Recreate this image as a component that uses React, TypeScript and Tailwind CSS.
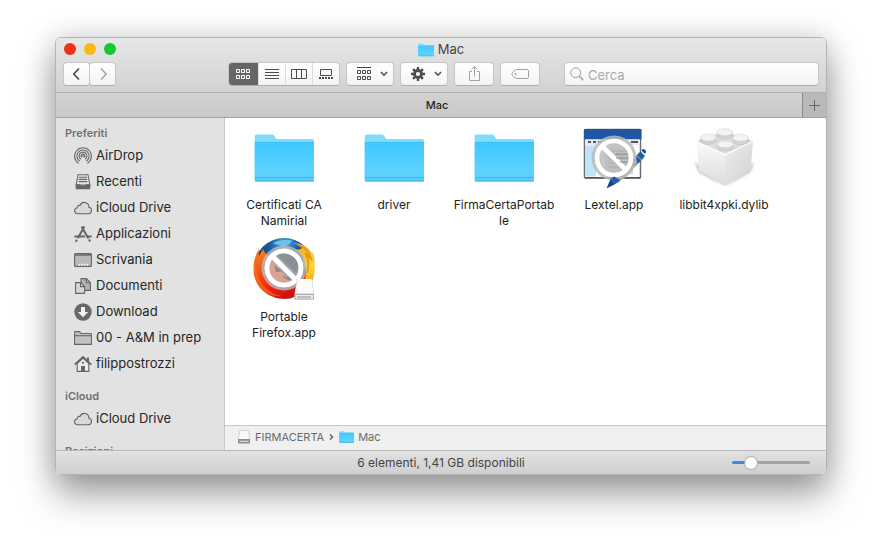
import { useState } from "react";
import type { ReactNode } from "react";

const FolderIcon = ({ className }: { className?: string }) => (
  <svg viewBox="2 8 60 48" className={className} aria-hidden="true">
    <defs>
      <linearGradient id="folderFront" x1="0" y1="0" x2="0" y2="1">
        <stop offset="0" stopColor="#3ec8ff" />
        <stop offset="0.75" stopColor="#5ed3ff" />
        <stop offset="1" stopColor="#54cbfa" />
      </linearGradient>
    </defs>
    <path
      d="M2.7 54V10.5c0-1.2.8-2 2-2h14.5c1.8 0 2.6.6 3.5 2l1.1 1.7c.5.7 1 .9 2 .9H60c1.2 0 2 .8 2 2V54z"
      fill="#7fdcfa"
    />
    <path
      d="M2.7 17.6c0-1 .7-1.7 1.700-1.700h56c1 0 1.600.7 1.600 1.700V54c0 .9-.6 1.500-1.500 1.500H4.200c-.9 0-1.500-.6-1.500-1.500z"
      fill="url(#folderFront)"
    />
    <path d="M2.7 16.4h59.300" stroke="#38bdf0" strokeWidth="0.7" />
    <path d="M3 51.5h59M3 55h59" stroke="#3fb3e2" strokeWidth="0.9" />
  </svg>
);

const Prohibited = ({ cy = 32 }: { cy?: number }) => (
  <g>
    <circle cx="32" cy={cy} r="22.5" fill="#b9b9b9" fillOpacity="0.82" />
    <circle cx="32" cy={cy} r="17" fill="none" stroke="#fff" strokeWidth="4.6" />
    <path d={`M20.5 ${cy - 11.5}L43.5 ${cy + 11.5}`} stroke="#fff" strokeWidth="4.6" />
  </g>
);

const LextelIcon = () => (
  <svg viewBox="0 0 64 64" className="size-16" aria-hidden="true">
    <rect x="2.5" y="3.5" width="56" height="48.5" rx="1" fill="#fff" stroke="#6b6e73" strokeWidth="1.5" />
    <path d="M3 51.8h55.5" stroke="#55585c" strokeWidth="1.5" />
    <rect x="2" y="3" width="57.5" height="10.5" fill="#1f57a6" />
    <rect x="3" y="13.5" width="55" height="5.5" fill="#e6e8ea" />
    <path d="M6 16h3m2 0h3m2 0h3m30 0h7" stroke="#54585e" strokeWidth="2" />
    <rect x="4" y="19.5" width="10" height="31" fill="#bfe4f7" />
    <rect x="23" y="21" width="28" height="27" fill="#d4d6d8" />
    <path d="M27 25h20M27 29h20M27 33h20M27 37h16M27 41h12" stroke="#74787d" strokeWidth="1.2" />
    <path d="M30 52L57 27l5 5-26 25z" fill="#8f9297" />
    <Prohibited />
    <path d="M34 28h12M34 32h12M38 36h8" stroke="#8d9094" strokeWidth="1" />
    <path d="M24.5 62.5l4-9.5 5 5z" fill="#174987" />
    <path d="M28.5 53l3.5-2.5 6 3.5-4.5 4z" fill="#1f5dab" />
    <path d="M55 29l3.500-3.500 4.500 4.500-3.500 3.500z" fill="#1f5dab" />
    <path d="M59.5 24.5l1-1c.6-.6 1.400-.6 2 0l1.200 1.300c.6.6.6 1.300 0 1.900l-1 1z" fill="#174987" />
    <path d="M54.5 30l4.500 4.500-3 3-1.500-4z" fill="#1f5dab" />
  </svg>
);

const studs = [
  [32.7, 7.3],
  [16.3, 12.5],
  [48.7, 12.8],
  [33.3, 19.3],
];

const BrickIcon = () => (
  <svg viewBox="0 0 64 64" className="size-16" aria-hidden="true">
    <defs>
      <linearGradient id="brickLeft" x1="0" y1="0" x2="0" y2="1">
        <stop offset="0" stopColor="#fafafa" />
        <stop offset="1" stopColor="#dcdcdc" />
      </linearGradient>
      <linearGradient id="brickRight" x1="0" y1="0" x2="1" y2="1">
        <stop offset="0" stopColor="#ececec" />
        <stop offset="1" stopColor="#d2d2d2" />
      </linearGradient>
      <filter id="brickBlur">
        <feGaussianBlur stdDeviation="1.5" />
      </filter>
    </defs>
    <path d="M3 36l30 24 29-24-4 10-25 14L7 46z" fill="#b5b5b5" filter="url(#brickBlur)" />
    <path d="M4.500 15L32.500 5 61 15 33 28z" fill="#dedede" />
    <path d="M4.500 15.500L33 29v31L7 44.500z" fill="url(#brickLeft)" />
    <path d="M61 15.500L33 29v31l25.500-15.500z" fill="url(#brickRight)" />
    <path d="M4.500 15.500L33 29l28-13.500" fill="none" stroke="#fff" strokeWidth="1" />
    {studs.map(([x, y]) => (
      <g key={x}>
        <ellipse cx={x} cy={y + 1.7} rx="8.2" ry="4.3" fill="#b4b4b4" />
        <path d={`M${x - 7.8} ${y - 1}v3c0 5 15.600 5 15.600 0v-3z`} fill="#d2d2d2" />
        <ellipse cx={x} cy={y - 1} rx="7.8" ry="3.5" fill="#f3f3f3" stroke="#cccccc" strokeWidth="0.5" />
      </g>
    ))}
  </svg>
);

const FirefoxIcon = () => (
  <svg viewBox="0 0 64 64" className="size-16" aria-hidden="true">
    <defs>
      <radialGradient id="globe" cx="0.5" cy="0.1" r="0.6">
        <stop offset="0" stopColor="#4fa8de" />
        <stop offset="0.4" stopColor="#1d5ba3" />
        <stop offset="1" stopColor="#12305f" />
      </radialGradient>
      <linearGradient id="fox" x1="0" y1="0" x2="0.4" y2="1">
        <stop offset="0" stopColor="#f58a1f" />
        <stop offset="0.4" stopColor="#f4581a" />
        <stop offset="0.8" stopColor="#f01e12" />
        <stop offset="1" stopColor="#c8160f" />
      </linearGradient>
      <linearGradient id="tail" x1="0" y1="0" x2="0" y2="1">
        <stop offset="0" stopColor="#f0a81f" />
        <stop offset="0.5" stopColor="#fbd936" />
        <stop offset="1" stopColor="#f0901c" />
      </linearGradient>
    </defs>
    <circle cx="32" cy="30" r="30" fill="url(#globe)" />
    <path d="M21 6c4-4 14-5 20-3-3 1-3 4-8 5-4 1-6-2-12-2z" fill="#6cc2ec" />
    <path
      d="M7 10c-1 3 0 6 0 8l4-7c1 3 3 5 5 6h8c-1 4-2 6-6 8-2 11 4 19 14 20 9 1 15-3 19-8l8-5C57 49 47 61 33 61 15 61 1.500 48 1.500 31 1.500 22 4 16 7 10z"
      fill="url(#fox)"
    />
    <path d="M4 22C2 38 12 55 30 58 14 60 2 48 2 32c0-4 1-7 2-10z" fill="#f77a1c" opacity="0.6" />
    <path
      d="M40 5c10 0 17 4 21 12l-1-5c4 9 4 25-1 34l-11 5c6-8 8-17 3-25 1-8-3-12-9-14 4 0 7-1 8-2-3-3-6-4-10-5z"
      fill="url(#tail)"
    />
    <path d="M46 7c7 2 11 7 13 14l-6-6c4 6 4 13 2 20" fill="none" stroke="#e8961b" strokeWidth="1.8" />
    <path d="M18 25c6-3 12-2 15 1-4 4-7 5-12 6 5 8 15 10 21 6-3 10-17 13-24 4-4-5-4-12 0-17z" fill="#ee6f34" />
    <Prohibited cy={30} />
    <path d="M26 15c6-1 16 2 19 9 1 5 1 8-1 11L25 17z" fill="#8c8f93" />
    <path d="M18 23l22 20c-9 5-22-1-23-12z" fill="#d9a493" />
    <path d="M22 27l8 6c-2 1-4 1-6 1zM30 37c3 2 5 2 7 2l3 3c-4 1-8-1-10-5z" fill="#8f8a8b" />
    <circle cx="32" cy="30" r="17" fill="none" stroke="#fff" strokeWidth="4.6" />
    <path d="M20.500 18.500l23 23" stroke="#fff" strokeWidth="4.6" />
    <path d="M45 41h15l2 15v5.500H42.500V56z" fill="#c9c9c9" />
    <path d="M45.500 41h14l2 14.500H43z" fill="#fbfbfb" />
    <path d="M43 56.500h18.500V61H43z" fill="#eeeeee" stroke="#9a9a9a" strokeWidth="0.7" />
    <path d="M45 59h14" stroke="#777" strokeWidth="0.8" />
  </svg>
);

const DriveIcon = () => (
  <svg viewBox="0 0 14 16" className="h-4 w-3.5" aria-hidden="true">
    <path d="M2.700 1.500h8.600l1.500 9.500H1.200z" fill="#fafafa" stroke="#c4c4c4" strokeWidth="0.7" />
    <rect x="1" y="10" width="12" height="4.5" rx="0.8" fill="#8e8e8e" />
    <path d="M2.500 12.300h9" stroke="#d6d6d6" strokeWidth="1.2" />
  </svg>
);

const SideIcon = ({ children }: { children: ReactNode }) => (
  <svg
    viewBox="0 0 18 18"
    className="size-[18px] shrink-0"
    fill="none"
    stroke="#666666"
    strokeWidth="1.1"
    aria-hidden="true"
  >
    {children}
  </svg>
);

const CloudIcon = () => (
  <SideIcon>
    <path
      d="M4 14.700C2 14.700.6 13.400.6 11.700c0-1.500 1-2.600 2.500-2.900-.1-1.700 1.300-2.800 2.900-2.300.7-1.900 2.300-3.100 4.300-3.100 2.700 0 4.700 2 4.600 4.700 1.600.3 2.600 1.600 2.600 3.200 0 2-1.500 3.400-3.500 3.400z"
      fill="#d9d9d9"
    />
  </SideIcon>
);

const AirDropIcon = () => (
  <SideIcon>
    <path d="M4.700 16.400a8.400 8.400 0 1 1 8.600 0" />
    <path d="M5.700 14.200a6.100 6.100 0 1 1 6.600 0" />
    <path d="M6.800 12.200a3.900 3.900 0 1 1 4.400 0" />
    <path d="M7.800 10.500a1.900 1.900 0 1 1 2.400 0" />
    <circle cx="9" cy="9" r="0.9" fill="#666" stroke="none" />
  </SideIcon>
);

const RecentsIcon = () => (
  <SideIcon>
    <path d="M4 1.700h10l1.800 10.300H2.200z" fill="#e4e4e4" />
    <path d="M5 4.200h8M4.800 6.400h8.400M4.600 8.600h8.800" />
    <path
      d="M1.700 11.300h4.200c.4 1.500 5.800 1.500 6.200 0h4.200v3.900c0 .7-.4 1.100-1.100 1.100H2.800c-.7 0-1.100-.4-1.100-1.100z"
      fill="#666"
      stroke="none"
    />
  </SideIcon>
);

const AppsIcon = () => (
  <SideIcon>
    <path d="M10.400 1.500L3.800 13.300M7.600 1.500l6.800 12" strokeWidth="2" />
    <path d="M.4 11.500h10.800M13.400 11.500h4.200" strokeWidth="1.8" />
    <path d="M2.900 14.700l-1.100 2M15 14.500l1.200 2" strokeWidth="2" />
  </SideIcon>
);

const DesktopIcon = () => (
  <SideIcon>
    <rect x="0.6" y="2.6" width="16.8" height="12.8" rx="1" fill="#b9b9b9" />
    <path d="M1 4h16" strokeWidth="1.4" />
    <path d="M4.500 13.800h9.500" stroke="#f3f3f3" strokeWidth="2" strokeDasharray="1.600 1" />
    <path d="M1 15.500h16" />
  </SideIcon>
);

const DocumentsIcon = () => (
  <SideIcon>
    <path d="M7 1.600h5.600l3.800 4v7.800H7z" fill="#b2b2b2" />
    <path d="M12.300 1.600v4.200h4" />
    <path d="M1.600 5.600h5.200l3.800 3.800v7H1.600z" fill="#d7d7d7" />
    <path d="M6.600 5.600v4h4" />
  </SideIcon>
);

const DownloadIcon = () => (
  <SideIcon>
    <circle cx="9" cy="9" r="8.7" fill="#686868" stroke="none" />
    <path d="M7 4h4v5h3.200L9 14.200 3.800 9H7z" fill="#f2f2f2" stroke="none" />
  </SideIcon>
);

const SideFolderIcon = () => (
  <SideIcon>
    <path d="M.6 15.400V3.200c0-.4.2-.6.6-.6h4.300l1.500 1.900h9.800c.4 0 .6.200.6.6v10.300z" fill="#c2c2c2" />
    <path d="M.6 6.700h16.800" />
  </SideIcon>
);

const HomeIcon = () => (
  <SideIcon>
    <path d="M3.200 8.500L9 3.200l5.800 5.300v7.900H3.200z" fill="#ececec" />
    <path d="M.7 9.700L9 2l8.300 7.700" strokeWidth="1.8" />
    <path d="M14 2.500v4" strokeWidth="2" />
    <circle cx="9" cy="7.8" r="1.1" fill="#666" stroke="none" />
    <path d="M7 11h4v5.400H7z" fill="#666" stroke="none" />
  </SideIcon>
);

const Chevron = () => (
  <svg viewBox="0 0 8 6" className="h-1.5 w-2" fill="none" stroke="#4d4d4d" strokeWidth="1.5" aria-hidden="true">
    <path d="M1 1l3 3.200L7 1" />
  </svg>
);

// Shared look for the small line drawings inside the toolbar buttons
const ToolIcon = ({ stroke = "#4d4d4d", children }: { stroke?: string; children: ReactNode }) => (
  <svg viewBox="0 0 16 16" className="size-4 shrink-0" fill="none" stroke={stroke} aria-hidden="true">
    {children}
  </svg>
);

const views = [
  {
    label: "Icone",
    icon: (
      <path d="M1.500 3.500h3v3h-3zM6.500 3.500h3v3h-3zM11.500 3.500h3v3h-3zM1.500 9.500h3v3h-3zM6.500 9.500h3v3h-3zM11.500 9.500h3v3h-3z" />
    ),
  },
  { label: "Elenco", icon: <path d="M1 3.500h14M1 6.500h14M1 9.500h14M1 12.500h14" /> },
  { label: "Colonne", icon: <path d="M.5 3.500h15v9H.5zM5.500 3.500v9M10.500 3.500v9" /> },
  {
    label: "Galleria",
    icon: (
      <>
        <path d="M2.500 3.500h11v6h-11z" />
        <path d="M1 12h14" strokeWidth="2" strokeDasharray="2 1" />
      </>
    ),
  },
];

const favorites = [
  { label: "AirDrop", icon: <AirDropIcon /> },
  { label: "Recenti", icon: <RecentsIcon /> },
  { label: "iCloud Drive", icon: <CloudIcon /> },
  { label: "Applicazioni", icon: <AppsIcon /> },
  { label: "Scrivania", icon: <DesktopIcon /> },
  { label: "Documenti", icon: <DocumentsIcon /> },
  { label: "Download", icon: <DownloadIcon /> },
  { label: "00 - A&M in prep", icon: <SideFolderIcon /> },
  { label: "filippostrozzi", icon: <HomeIcon /> },
];

const sections = [
  { title: "Preferiti", items: favorites },
  { title: "iCloud", items: [{ label: "iCloud Drive", icon: <CloudIcon /> }] },
  { title: "Posizioni", items: [] },
];

const folder = <FolderIcon className="h-12 w-[60px]" />;

const files = [
  { name: "Certificati CA Namirial", icon: folder },
  { name: "driver", icon: folder },
  { name: "FirmaCertaPortable", icon: folder },
  { name: "Lextel.app", icon: <LextelIcon /> },
  { name: "libbit4xpki.dylib", icon: <BrickIcon /> },
  { name: "Portable Firefox.app", icon: <FirefoxIcon /> },
];

const buttonStyle =
  "flex h-6 items-center justify-center rounded border border-[#c6c6c6] border-b-[#b0b0b0] bg-linear-to-b from-white to-[#f4f4f4]";

const Toolbar = () => {
  const [view, setView] = useState("Icone");
  const [query, setQuery] = useState("");

  return (
    <div className="flex items-center px-[7px] pt-0.5 pb-1.5">
      <div className="mr-28 flex">
        <button type="button" aria-label="Indietro" className={`${buttonStyle} w-[27px]`}>
          <ToolIcon>
            <path d="M10 2.500L4.800 8l5.200 5.500" strokeWidth="1.7" />
          </ToolIcon>
        </button>
        <button type="button" aria-label="Avanti" className={`${buttonStyle} -ml-px w-[27px]`}>
          <ToolIcon stroke="#a6a6a6">
            <path d="M6 2.500L11.200 8 6 13.500" strokeWidth="1.6" />
          </ToolIcon>
        </button>
      </div>

      <div className="flex flex-1 gap-1.5">
        <div className={`${buttonStyle} shrink-0 overflow-hidden`}>
          {views.map((v) => (
            <button
              key={v.label}
              type="button"
              aria-label={v.label}
              aria-pressed={view === v.label}
              onClick={() => setView(v.label)}
              className={
                view === v.label
                  ? "-my-px -ml-px flex h-6 w-[30px] items-center justify-center bg-[#666666]"
                  : "flex h-6 w-[27px] items-center justify-center border-l border-[#dcdcdc]"
              }
            >
              <ToolIcon stroke={view === v.label ? "#ffffff" : "#4d4d4d"}>{v.icon}</ToolIcon>
            </button>
          ))}
        </div>
        <button type="button" aria-label="Raggruppa" className={`${buttonStyle} w-12 gap-2 pl-1`}>
          <ToolIcon>
            <path d="M1 1.500h14M1.500 4.500h3v3h-3zM6.500 4.500h3v3h-3zM11.500 4.500h3v3h-3zM1.500 10.500h3v3h-3zM6.500 10.500h3v3h-3zM11.500 10.500h3v3h-3z" />
          </ToolIcon>
          <Chevron />
        </button>
        <button type="button" aria-label="Azioni" className={`${buttonStyle} w-12 gap-2 pl-1`}>
          <ToolIcon>
            <circle cx="8" cy="8" r="3.5" strokeWidth="2.8" />
            <path
              d="M8 1v3M8 12v3M1 8h3M12 8h3M3.050 3.050l2 2M10.950 10.950l2 2M3.050 12.950l2-2M10.950 5.050l2-2"
              strokeWidth="2.4"
            />
          </ToolIcon>
          <Chevron />
        </button>
        <button type="button" aria-label="Condividi" className={`${buttonStyle} w-10`}>
          <ToolIcon stroke="#a3a3a3">
            <path d="M6 5.500H3.500v9h10v-9H11M8.500 10.500v-10M5.500 3.500l3-3 3 3" />
          </ToolIcon>
        </button>
        <button type="button" aria-label="Tag" className={`${buttonStyle} w-10`}>
          <svg viewBox="0 0 18 12" className="h-3 w-[18px]" fill="none" stroke="#a0a0a0" aria-hidden="true">
            <path d="M5.500 1.500H16c.8 0 1.500.7 1.500 1.500v6c0 .8-.7 1.500-1.500 1.500H5.500C4 10.500.8 7.200.8 6S4 1.500 5.500 1.500z" />
            <circle cx="4.500" cy="6" r="0.7" />
          </svg>
        </button>

        <div className="ml-[18px] flex h-6 min-w-0 flex-1 items-center gap-1 rounded border border-[#c6c6c6] border-b-[#b0b0b0] bg-linear-to-b from-white to-[#f4f4f4] px-[5px]">
          <svg viewBox="0 0 14 14" className="size-3.5 shrink-0" fill="none" stroke="#9b9b9b" aria-hidden="true">
            <circle cx="5.7" cy="5.7" r="4.9" />
            <path d="M9.300 9.300l4 4" strokeWidth="1.3" />
          </svg>
          <input
            type="search"
            aria-label="Cerca"
            value={query}
            onChange={(e) => setQuery(e.target.value)}
            placeholder="Cerca"
            className="h-full min-w-0 flex-1 bg-transparent pt-0.5 text-[13px] text-[#333333] outline-none placeholder:text-[#a9a9a9]"
          />
        </div>
      </div>
    </div>
  );
};

const Sidebar = () => (
  <nav className="flex w-[169px] shrink-0 flex-col gap-[11px] overflow-hidden border-r border-[#c8c8c8] bg-[#e2e2e2] pt-[7px]">
    {sections.map((section) => (
      <div key={section.title}>
        <h2 className="mb-0.5 pl-[9px] text-[11px] leading-4 font-semibold text-[#707070]">{section.title}</h2>
        <ul>
          {section.items.map((item) => (
            <li key={item.label}>
              <a href="#" className="flex h-[26px] items-center gap-1 pl-[18px] text-[13px] text-[#262626]">
                {item.icon}
                <span className="whitespace-nowrap">{item.label}</span>
              </a>
            </li>
          ))}
        </ul>
      </div>
    ))}
  </nav>
);

const StatusBar = () => {
  const [zoom, setZoom] = useState(20);

  return (
    <footer className="grid h-6 shrink-0 grid-cols-[1fr_auto_1fr] items-center border-t border-[#b9b9b9] bg-linear-to-b from-[#e2e2e2] to-[#cfcfcf] px-4">
      <p className="col-start-2 text-xs text-[#454545]">6 elementi, 1,41 GB disponibili</p>
      <input
        type="range"
        aria-label="Dimensione icone"
        min="0"
        max="100"
        value={zoom}
        onChange={(e) => setZoom(Number(e.target.value))}
        className="h-[3px] w-[78px] appearance-none justify-self-end rounded-full [&::-webkit-slider-thumb]:size-3 [&::-webkit-slider-thumb]:appearance-none [&::-webkit-slider-thumb]:rounded-full [&::-webkit-slider-thumb]:bg-white [&::-webkit-slider-thumb]:shadow-[0_0_1px_1px_#b0b0b0]"
        style={{ background: `linear-gradient(to right, #3f87d9 ${zoom}%, #a4a4a4 ${zoom}%)` }}
      />
    </footer>
  );
};

const App = () => {
  return (
    <div className="h-screen bg-white px-[55px] pt-[37px] pb-[73px] font-['Inter','Liberation_Sans',sans-serif]">
      <div className="flex h-full flex-col overflow-hidden rounded-md border border-[#b4b4b4] shadow-[0_20px_36px_rgba(0,0,0,0.36),0_0_30px_rgba(0,0,0,0.16)]">
        <header className="shrink-0 border-b border-[#b0b0b0] bg-linear-to-b from-[#e7e7e7] to-[#d2d2d2]">
          <div className="grid h-[22px] grid-cols-[1fr_auto_1fr] items-center px-2">
            <div className="flex gap-2">
              <button type="button" aria-label="Chiudi" className="size-3 rounded-full bg-[#f0301c]" />
              <button type="button" aria-label="Riduci" className="size-3 rounded-full bg-[#fdb713]" />
              <button type="button" aria-label="Ingrandisci" className="size-3 rounded-full bg-[#11cb2c]" />
            </div>
            <h1 className="flex items-center gap-1 pt-0.5 text-[13px] text-[#454545]">
              <FolderIcon className="h-3.5 w-4" />
              Mac
            </h1>
          </div>
          <Toolbar />
        </header>

        <div className="flex h-[25px] shrink-0 border-b border-[#a3a3a3] bg-linear-to-b from-[#d2d2d2] to-[#c9c9c9]">
          <button type="button" className="flex-1 pl-4 text-[11px] font-medium text-[#262626]">
            Mac
          </button>
          <button
            type="button"
            aria-label="Nuovo pannello"
            className="flex w-6 items-center justify-center border-l border-[#8d8d8d] bg-[#b9b9b9]"
          >
            <svg viewBox="0 0 11 11" className="size-[11px]" stroke="#6a6a6a" aria-hidden="true">
              <path d="M5.500 0v11M0 5.500h11" />
            </svg>
          </button>
        </div>

        <div className="flex min-h-0 flex-1">
          <Sidebar />
          <main className="flex min-w-0 flex-1 flex-col bg-white">
            <ul className="grid min-h-0 flex-1 grid-cols-[repeat(auto-fill,110px)] content-start overflow-hidden pt-2 pl-1">
              {files.map((file) => (
                <li key={file.name} className="flex flex-col items-center pb-[9px]">
                  <div className="flex size-16 items-center justify-center">{file.icon}</div>
                  <p className="mt-[7px] w-[102px] text-center text-xs leading-4 break-words text-[#222222]">
                    {file.name}
                  </p>
                </li>
              ))}
            </ul>
            <div className="flex h-[25px] shrink-0 items-center border-t border-[#c8c8c8] bg-[#f0f0f0] pb-0.5 pl-3 text-[11px] text-[#6b6b6b]">
              <DriveIcon />
              <span className="ml-1">FIRMACERTA</span>
              <svg viewBox="0 0 5 8" className="mx-[5px] h-2 w-[5px]" fill="none" stroke="#5a5a5a" strokeWidth="1.3" aria-hidden="true">
                <path d="M1 1.500L3.500 4 1 6.500" />
              </svg>
              <FolderIcon className="h-3 w-[15px]" />
              <span className="ml-1">Mac</span>
            </div>
          </main>
        </div>
        <StatusBar />
      </div>
    </div>
  );
};

export default App;
